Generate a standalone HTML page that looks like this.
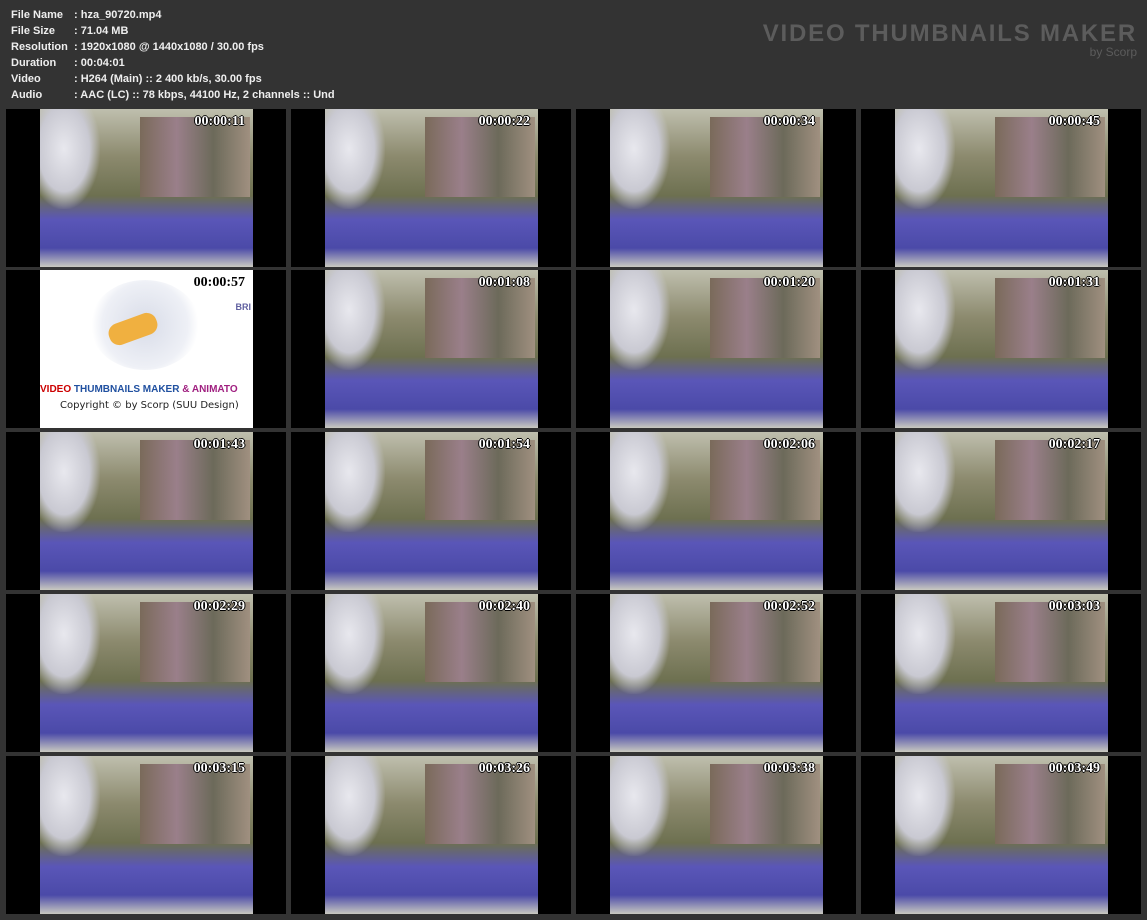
<!DOCTYPE html>
<html><head><meta charset="utf-8"><style>
body{margin:0;width:1147px;height:920px;background:#333;overflow:hidden;position:relative;font-family:"Liberation Sans",sans-serif;}
.info{position:absolute;left:11px;top:7px;color:#eee;font-weight:bold;font-size:11px;line-height:16px;}
.info div{white-space:nowrap}
.info span{display:inline-block;width:63px}
.wm{position:absolute;right:10px;top:22px;color:#5c5c5c;font-weight:bold;font-size:24px;letter-spacing:1.8px;font-family:"Liberation Sans",sans-serif;text-align:right;line-height:24px;}
.wm small{display:block;font-size:12px;font-weight:normal;letter-spacing:0;line-height:12px;color:#5c5c5c}
.cell{position:absolute;width:280px;height:158px;background:#000;}
.th{position:absolute;left:34px;top:0;width:213px;height:158px;background:linear-gradient(180deg,#bfbfae 0%,#8c8a6e 30%,#6d7050 55%,#5a56b8 70%,#4b4aa8 88%,#c9c9c0 100%);overflow:hidden}
.th:before{content:"";position:absolute;left:0;top:0;width:60px;height:100px;background:radial-gradient(ellipse at 40% 40%,#e8e8ee 0,#c9c9d2 50%,transparent 72%)}
.th:after{content:"";position:absolute;left:100px;top:8px;width:110px;height:80px;background:linear-gradient(90deg,#7a6a5a,#9a7f8a,#6c6a5a,#a09080)}
.t{position:absolute;right:8px;top:5px;color:#fff;font:bold 14px "Liberation Serif",serif;z-index:2;text-shadow:-1px 0 #000,1px 0 #000,0 -1px #000,0 1px #000;}
.logo{background:#fff}
.logo:before,.logo:after{display:none}
</style></head><body>
<div class="info">
<div><span>File Name</span>: hza_90720.mp4</div>
<div><span>File Size</span>: 71.04 MB</div>
<div><span>Resolution</span>: 1920x1080 @ 1440x1080 / 30.00 fps</div>
<div><span>Duration</span>: 00:04:01</div>
<div><span>Video</span>: H264 (Main) :: 2 400 kb/s, 30.00 fps</div>
<div><span>Audio</span>: AAC (LC) :: 78 kbps, 44100 Hz, 2 channels :: Und</div>
</div>
<div class="wm">VIDEO THUMBNAILS MAKER<small>by Scorp</small></div>

<div class="cell" style="left:6px;top:109px"><div class="th"><div class="t">00:00:11</div></div></div>
<div class="cell" style="left:291px;top:109px"><div class="th"><div class="t">00:00:22</div></div></div>
<div class="cell" style="left:576px;top:109px"><div class="th"><div class="t">00:00:34</div></div></div>
<div class="cell" style="left:861px;top:109px"><div class="th"><div class="t">00:00:45</div></div></div>

<div class="cell" style="left:6px;top:270px"><div class="th logo">
<div style="position:absolute;left:50px;top:10px;width:110px;height:90px;border-radius:50%;background:radial-gradient(circle,#d8dce8 0,#eef0f6 60%,#fff 75%)"></div>
<div style="position:absolute;left:68px;top:48px;width:50px;height:22px;background:#f0b040;border-radius:10px;transform:rotate(-20deg)"></div>
<div class="t" style="color:#000;text-shadow:none">00:00:57</div>
<div style="position:absolute;right:2px;top:32px;font:bold 9px sans-serif;color:#6060a0">BRI</div>
<div style="position:absolute;left:0;top:114px;font:bold 10px 'Liberation Sans',sans-serif;white-space:nowrap"><span style="color:#c00">VIDEO</span> <span style="color:#2050a0">THUMBNAILS MAKER</span> <span style="color:#a02080">&amp; ANIMATO</span></div>
<div style="position:absolute;left:20px;top:130px;font:10px 'DejaVu Sans',sans-serif;color:#222;white-space:nowrap">Copyright © by Scorp (SUU Design)</div>
</div></div>
<div class="cell" style="left:291px;top:270px"><div class="th"><div class="t">00:01:08</div></div></div>
<div class="cell" style="left:576px;top:270px"><div class="th"><div class="t">00:01:20</div></div></div>
<div class="cell" style="left:861px;top:270px"><div class="th"><div class="t">00:01:31</div></div></div>

<div class="cell" style="left:6px;top:432px"><div class="th"><div class="t">00:01:43</div></div></div>
<div class="cell" style="left:291px;top:432px"><div class="th"><div class="t">00:01:54</div></div></div>
<div class="cell" style="left:576px;top:432px"><div class="th"><div class="t">00:02:06</div></div></div>
<div class="cell" style="left:861px;top:432px"><div class="th"><div class="t">00:02:17</div></div></div>

<div class="cell" style="left:6px;top:594px"><div class="th"><div class="t">00:02:29</div></div></div>
<div class="cell" style="left:291px;top:594px"><div class="th"><div class="t">00:02:40</div></div></div>
<div class="cell" style="left:576px;top:594px"><div class="th"><div class="t">00:02:52</div></div></div>
<div class="cell" style="left:861px;top:594px"><div class="th"><div class="t">00:03:03</div></div></div>

<div class="cell" style="left:6px;top:756px"><div class="th"><div class="t">00:03:15</div></div></div>
<div class="cell" style="left:291px;top:756px"><div class="th"><div class="t">00:03:26</div></div></div>
<div class="cell" style="left:576px;top:756px"><div class="th"><div class="t">00:03:38</div></div></div>
<div class="cell" style="left:861px;top:756px"><div class="th"><div class="t">00:03:49</div></div></div>
</body></html>
